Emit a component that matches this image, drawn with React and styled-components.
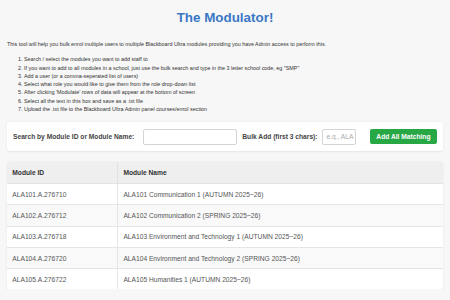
import React from "react";
import styled, { createGlobalStyle } from "styled-components";

const Global = createGlobalStyle`
  html, body { margin: 0; padding: 0; }
  body {
    background: #f7f7f7;
    font-family: "Liberation Sans", Arial, sans-serif;
    color: #333;
  }
`;

const Page = styled.div`
  padding: 9.5px 7px 0 7px;
`;

const Title = styled.h1`
  margin: 0;
  text-align: center;
  font-size: 13.4px;
  line-height: 15.3px;
  font-weight: bold;
  color: #3a77c6;
`;

const Intro = styled.p`
  margin: 16px 0 0 0;
  font-size: 5.4px;
  line-height: 6.4px;
  color: #333;
`;

const Steps = styled.ol`
  margin: 8px 0 0 0;
  padding-left: 17px;
  font-size: 5.4px;
  line-height: 8.3px;
  color: #333;
`;

const Card = styled.div`
  margin-top: 9px;
  background: #fff;
  border-radius: 3px;
  box-shadow: 0 0.5px 2px rgba(0, 0, 0, 0.08);
  padding: 6.5px 6px;
  display: flex;
  align-items: center;
`;

const Label = styled.label`
  font-size: 6.67px;
  font-weight: bold;
  color: #444;
  white-space: nowrap;
  margin-left: ${(p) => p.$ml || 0}px;
`;

const Input = styled.input`
  box-sizing: border-box;
  height: 16px;
  width: ${(p) => p.$w}px;
  margin-left: ${(p) => p.$ml}px;
  border: 1px solid #d4d4d4;
  border-radius: 2px;
  background: #fff;
  font-family: "Liberation Sans", Arial, sans-serif;
  font-size: 6.67px;
  padding: 0 0 0 3.5px;
  outline: none;
  &::placeholder { color: #aaa; }
`;

const Button = styled.button`
  margin-left: 14px;
  height: 15px;
  width: 67px;
  padding: 0;
  border: none;
  border-radius: 2px;
  background: #28a745;
  color: #fff;
  font-family: "Liberation Sans", Arial, sans-serif;
  font-size: 6.67px;
  font-weight: bold;
  white-space: nowrap;
`;

const TableWrap = styled.div`
  margin-top: 10.4px;
  background: #fff;
  border-radius: 3px;
  box-shadow: 0 0.5px 2px rgba(0, 0, 0, 0.1);
  overflow: hidden;
`;

const Table = styled.table`
  width: 100%;
  border-collapse: collapse;
  font-size: 6.67px;
`;

const Th = styled.th`
  text-align: left;
  font-weight: bold;
  color: #333;
  background: #efefef;
  height: 21.3px;
  padding: 0 5.3px;
  border-bottom: 1px solid #e4e4e4;
  & + & { border-left: 1px solid #e2e2e2; }
  width: ${(p) => p.$w || "auto"};
`;

const Tr = styled.tr`
  background: ${(p) => (p.$alt ? "#f9f9f9" : "#fff")};
  border-top: 1px solid #e6e6e6;
`;

const Td = styled.td`
  height: 20.3px;
  padding: 0 5.3px;
  color: #555;
  & + & { border-left: 1px solid #e6e6e6; }
`;

const rows = [
  ["ALA101.A.276710", "ALA101 Communication 1 (AUTUMN 2025~26)"],
  ["ALA102.A.276712", "ALA102 Communication 2 (SPRING 2025~26)"],
  ["ALA103.A.276718", "ALA103 Environment and Technology 1 (AUTUMN 2025~26)"],
  ["ALA104.A.276720", "ALA104 Environment and Technology 2 (SPRING 2025~26)"],
  ["ALA105.A.276722", "ALA105 Humanities 1 (AUTUMN 2025~26)"],
];

export default function App() {
  return (
    <>
      <Global />
      <Page>
        <Title>The Modulator!</Title>
        <Intro>
          This tool will help you bulk enrol multiple users to multiple Blackboard Ultra modules providing you have Admin access to perform this.
        </Intro>
        <Steps>
          <li>Search / select the modules you want to add staff to</li>
          <li>If you want to add to all modules in a school, just use the bulk search and type in the 3 letter school code, eg "SMP"</li>
          <li>Add a user (or a comma-seperated list of users)</li>
          <li>Select what role you would like to give them from the role drop-down list</li>
          <li>After clicking 'Modulate' rows of data will appear at the bottom of screen</li>
          <li>Select all the text in this box and save as a .txt file</li>
          <li>Upload the .txt file to the Blackboard Ultra Admin panel courses/enrol section</li>
        </Steps>
        <Card>
          <Label>Search by Module ID or Module Name:</Label>
          <Input $w={94} $ml={9} />
          <Label $ml={5}>Bulk Add (first 3 chars):</Label>
          <Input $w={34} $ml={4.4} placeholder="e.g., ALA" />
          <Button>Add All Matching</Button>
        </Card>
        <TableWrap>
          <Table>
            <thead>
              <tr>
                <Th $w="99.5px">Module ID</Th>
                <Th>Module Name</Th>
              </tr>
            </thead>
            <tbody>
              {rows.map((r, i) => (
                <Tr key={r[0]} $alt={i % 2 === 1}>
                  <Td>{r[0]}</Td>
                  <Td>{r[1]}</Td>
                </Tr>
              ))}
            </tbody>
          </Table>
        </TableWrap>
      </Page>
    </>
  );
}
